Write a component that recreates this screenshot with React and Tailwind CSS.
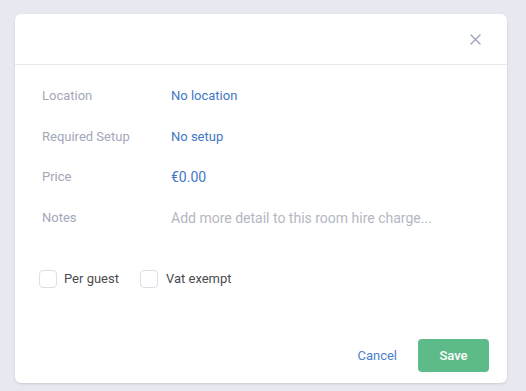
export default function App() {
  const rows = [
    { label: "Location", value: "No location", kind: "link" },
    { label: "Required Setup", value: "No setup", kind: "link" },
    { label: "Price", value: "€0.00", kind: "price" },
    { label: "Notes", value: "Add more detail to this room hire charge...", kind: "placeholder" },
  ];

  return (
    <div
      className="w-[526px] h-[391px] bg-[#e8e9f0] pt-[14px] pl-[15px] overflow-hidden"
      style={{ fontFamily: "Roboto, 'Liberation Sans', sans-serif" }}
    >
      <div className="w-[492px] h-[369px] bg-white rounded-[6px] shadow-sm flex flex-col">
        {/* Header */}
        <div className="h-[51px] border-b border-[#e7e9ef] flex items-center justify-end pr-[26px] pt-[1px]">
          <svg width="11" height="11" viewBox="0 0 11 11" className="text-[#9ea3bd]">
            <path d="M1 1L10 10M10 1L1 10" stroke="currentColor" strokeWidth="1.4" strokeLinecap="round" />
          </svg>
        </div>

        {/* Fields */}
        <div className="pt-[21px] pl-[27px] flex flex-col">
          {rows.map((r) => (
            <div key={r.label} className="h-[40.5px] flex items-center h-[40.5px]">
              <div className="w-[129px] self-start text-[13px] leading-5 text-[#a3a7ba]">{r.label}</div>
              <div
                className={
                  r.kind === "placeholder"
                    ? "self-start text-[14px] leading-5 text-[#b4b7c3]"
                    : r.kind === "price"
                    ? "self-start text-[14px] leading-5 text-[#4477c4]"
                    : "self-start text-[13px] leading-5 text-[#4477c4]"
                }
              >
                {r.value}
              </div>
            </div>
          ))}
        </div>

        {/* Checkboxes */}
        <div className="pl-[24px] mt-[21px] flex items-center text-[13px] text-[#4a4b50]">
          <label className="flex items-center gap-[7px]">
            <span className="w-[18px] h-[18px] rounded-[4px] border border-[#dcdfe7] bg-white" />
            <span>Per guest</span>
          </label>
          <label className="flex items-center gap-[8px] ml-[21px]">
            <span className="w-[18px] h-[18px] rounded-[4px] border border-[#dcdfe7] bg-white" />
            <span>Vat exempt</span>
          </label>
        </div>

        {/* Footer */}
        <div className="mt-auto pb-[11px] pr-[18px] flex items-center justify-end gap-[21px]">
          <button className="text-[13px] text-[#4d7fca] pt-[1px]">Cancel</button>
          <button className="w-[71px] h-[33px] rounded-[4px] bg-[#5dbb8a] text-white text-[13px] font-medium">
            Save
          </button>
        </div>
      </div>
    </div>
  );
}
